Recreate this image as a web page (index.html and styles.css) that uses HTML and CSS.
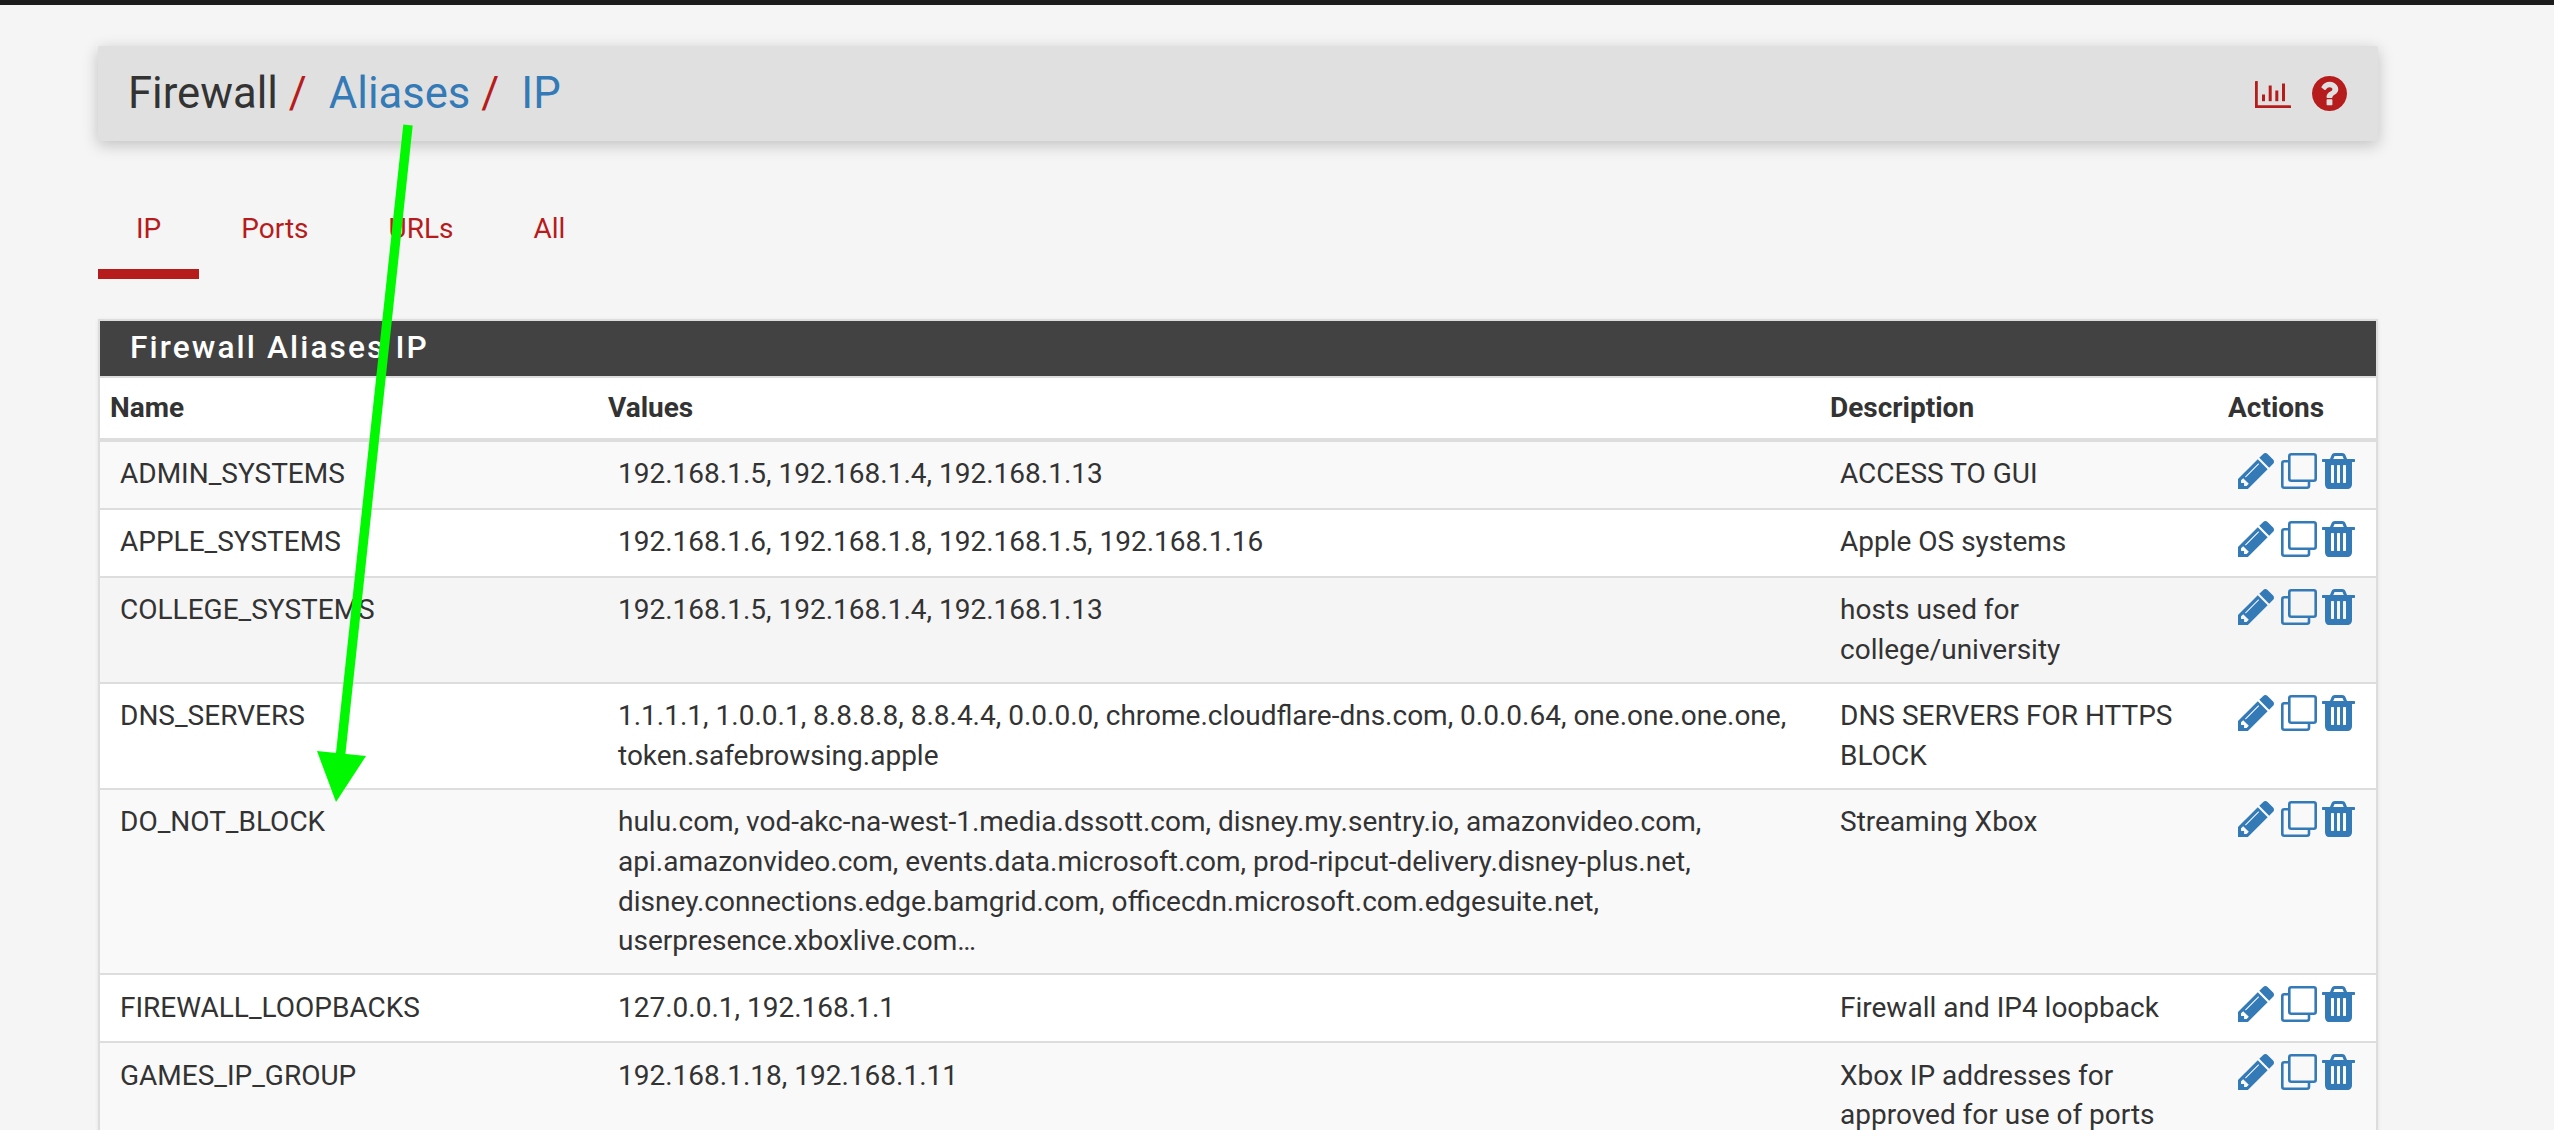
FILE: index.html
```html
<!DOCTYPE html>
<html lang="en">
<head>
<meta charset="utf-8">
<title>Firewall: Aliases: IP</title>
<link rel="stylesheet" href="styles.css">
</head>
<body>
<svg width="0" height="0" class="defs">
  <symbol id="i-pencil" viewBox="128 149 1515 1515"><path d="M491 1536l91-91-235-235-91 91v107h128v128h107zm523-928q0-22-22-22-10 0-17 7l-542 542q-7 7-7 17 0 22 22 22 10 0 17-7l542-542q7-7 7-17zm-54-192l416 416-832 832h-416v-416zm683 96q0 53-37 90l-166 166-416-416 166-165q36-38 90-38 53 0 91 38l235 234q37 39 37 91z"/></symbol>
  <symbol id="i-clone" viewBox="0 0 36 36"><rect x="8.3" y="1.3" width="26.4" height="26.4" rx="2" fill="none" stroke="currentColor" stroke-width="2.6"/><path d="M7 8.3H3.3a2 2 0 0 0-2 2V32.700a2 2 0 0 0 2 2H26a2 2 0 0 0 2-2V29" fill="none" stroke="currentColor" stroke-width="2.6"/></symbol>
  <symbol id="i-trash" viewBox="192 128 1408 1536"><path d="M704 1376v-704q0-14-9-23t-23-9h-64q-14 0-23 9t-9 23v704q0 14 9 23t23 9h64q14 0 23-9t9-23zm256 0v-704q0-14-9-23t-23-9h-64q-14 0-23 9t-9 23v704q0 14 9 23t23 9h64q14 0 23-9t9-23zm256 0v-704q0-14-9-23t-23-9h-64q-14 0-23 9t-9 23v704q0 14 9 23t23 9h64q14 0 23-9t9-23zm-544-992h448l-48-117q-7-9-17-11h-317q-10 2-17 11zm928 32v64q0 14-9 23t-23 9h-96v948q0 83-47 143.500t-113 60.500h-832q-66 0-113-58.500t-47-141.500v-952h-96q-14 0-23-9t-9-23v-64q0-14 9-23t23-9h309l70-167q15-37 54-63t79-26h320q40 0 79 26t54 63l70 167h309q14 0 23 9t9 23z"/></symbol>
</svg>
<div class="topbar"></div>
<main class="page">
  <header class="crumbs">
    <h1 class="crumb-list">
      <span class="crumb">Firewall</span><span class="sep">/</span>
      <a class="crumb link" href="#">Aliases</a><span class="sep">/</span>
      <a class="crumb link" href="#">IP</a>
    </h1>
    <div class="crumb-icons">
      <svg class="i-chart" viewBox="0 0 36 27" fill="#b71c1c"><rect x="0" y="0" width="2.800" height="27" rx=".6"/><rect x="0" y="24.200" width="36" height="2.800" rx=".6"/><rect x="7" y="13.500" width="3" height="6.700"/><rect x="13.700" y="4.500" width="3" height="15.700"/><rect x="20.300" y="9.500" width="3" height="10.700"/><rect x="27" y="2.500" width="3" height="17.700"/></svg>
      <svg class="i-help" viewBox="128 128 1536 1536" fill="#b71c1c"><path d="M1024 1376v-192q0-14-9-23t-23-9h-192q-14 0-23 9t-9 23v192q0 14 9 23t23 9h192q14 0 23-9t9-23zm256-672q0-88-55.500-163t-138.500-116-170-41q-243 0-371 213-15 24 8 42l132 100q7 6 19 6 16 0 25-12 53-68 86-92 34-24 86-24 48 0 85.500 26t37.500 59q0 38-20 61t-68 45q-63 28-115.500 86.500t-52.500 125.500v36q0 14 9 23t23 9h192q14 0 23-9t9-23q0-19 21.500-49.500t54.500-49.500q32-18 49-28.500t46-35 44.500-48 28-60.500 12.500-81zm384 192q0 209-103 385.500t-279.500 279.500-385.500 103-385.500-103-279.500-279.500-103-385.500 103-385.500 279.500-279.500 385.500-103 385.500 103 279.500 279.500 103 385.500z"/></svg>
    </div>
  </header>

  <nav class="tabs">
    <a class="tab active" href="#">IP</a>
    <a class="tab" href="#">Ports</a>
    <a class="tab" href="#">URLs</a>
    <a class="tab" href="#">All</a>
  </nav>

  <section class="panel">
    <h2 class="panel-title">Firewall Aliases IP</h2>
    <table class="aliases">
      <colgroup><col class="c-name"><col class="c-values"><col class="c-desc"><col class="c-actions"></colgroup>
      <thead>
        <tr><th>Name</th><th>Values</th><th>Description</th><th>Actions</th></tr>
      </thead>
      <tbody>
        <tr class="odd">
          <td>ADMIN_SYSTEMS</td><td>192.168.1.5, 192.168.1.4, 192.168.1.13</td><td>ACCESS TO GUI</td>
          <td class="acts"><div class="act-row"><svg class="ic"><use href="#i-pencil"/></svg><svg class="ic"><use href="#i-clone"/></svg><svg class="ic tr"><use href="#i-trash"/></svg></div></td>
        </tr>
        <tr>
          <td>APPLE_SYSTEMS</td><td>192.168.1.6, 192.168.1.8, 192.168.1.5, 192.168.1.16</td><td>Apple OS systems</td>
          <td class="acts"><div class="act-row"><svg class="ic"><use href="#i-pencil"/></svg><svg class="ic"><use href="#i-clone"/></svg><svg class="ic tr"><use href="#i-trash"/></svg></div></td>
        </tr>
        <tr class="hover">
          <td>COLLEGE_SYSTEMS</td><td>192.168.1.5, 192.168.1.4, 192.168.1.13</td><td>hosts used for college/university</td>
          <td class="acts"><div class="act-row"><svg class="ic"><use href="#i-pencil"/></svg><svg class="ic"><use href="#i-clone"/></svg><svg class="ic tr"><use href="#i-trash"/></svg></div></td>
        </tr>
        <tr>
          <td>DNS_SERVERS</td><td>1.1.1.1, 1.0.0.1, 8.8.8.8, 8.8.4.4, 0.0.0.0, chrome.cloudflare-dns.com, 0.0.0.64, one.one.one.one, token.safebrowsing.apple</td><td>DNS SERVERS FOR HTTPS BLOCK</td>
          <td class="acts"><div class="act-row"><svg class="ic"><use href="#i-pencil"/></svg><svg class="ic"><use href="#i-clone"/></svg><svg class="ic tr"><use href="#i-trash"/></svg></div></td>
        </tr>
        <tr class="odd">
          <td>DO_NOT_BLOCK</td><td>hulu.com, vod-akc-na-west-1.media.dssott.com, disney.my.sentry.io, amazonvideo.com, api.amazonvideo.com, events.data.microsoft.com, prod-ripcut-delivery.disney-plus.net, disney.connections.edge.bamgrid.com, officecdn.microsoft.com.edgesuite.net, userpresence.xboxlive.com…</td><td>Streaming Xbox</td>
          <td class="acts"><div class="act-row"><svg class="ic"><use href="#i-pencil"/></svg><svg class="ic"><use href="#i-clone"/></svg><svg class="ic tr"><use href="#i-trash"/></svg></div></td>
        </tr>
        <tr>
          <td>FIREWALL_LOOPBACKS</td><td>127.0.0.1, 192.168.1.1</td><td>Firewall and IP4 loopback</td>
          <td class="acts"><div class="act-row"><svg class="ic"><use href="#i-pencil"/></svg><svg class="ic"><use href="#i-clone"/></svg><svg class="ic tr"><use href="#i-trash"/></svg></div></td>
        </tr>
        <tr class="odd">
          <td>GAMES_IP_GROUP</td><td>192.168.1.18, 192.168.1.11</td><td>Xbox IP addresses for approved for use of ports</td>
          <td class="acts"><div class="act-row"><svg class="ic"><use href="#i-pencil"/></svg><svg class="ic"><use href="#i-clone"/></svg><svg class="ic tr"><use href="#i-trash"/></svg></div></td>
        </tr>
      </tbody>
    </table>
  </section>
</main>
<svg class="arrow" viewBox="0 0 2554 1130"><line x1="408" y1="125" x2="340" y2="760"/><polygon points="317,751 366,756 336,802"/></svg>
</body>
</html>
```
FILE: styles.css
```css
html, body {
  margin: 0;
  height: 1130px;
  overflow: hidden;
}
body {
  position: relative;
  background: #f5f5f5;
  color: #333;
  font-family: Roboto, "Liberation Sans", sans-serif;
  font-size: 28px;
  line-height: 39.6px;
}
.defs { position: absolute; }
.topbar { height: 5px; background: #1c1c1c; }
.page { margin: 41px 176px 0 98px; }

.crumbs {
  display: flex;
  align-items: center;
  justify-content: space-between;
  height: 95px;
  padding: 0 31px 0 30px;
  background: #e0e0e0;
  border-radius: 2px;
  box-shadow: 0 4px 16px rgba(0, 0, 0, .22);
}
.crumb-list {
  margin: 0;
  font-size: 43.6px;
  line-height: 60px;
  font-weight: 400;
  display: flex;
  align-items: baseline;
}
.crumb.link { color: #337ab7; text-decoration: none; }
.sep { color: #b71c1c; margin: 0 22px 0 11px; }
.crumb-icons { display: flex; align-items: center; gap: 21px; }
.i-chart { width: 36px; height: 27px; margin-top: 2px; }
.i-help { width: 35px; height: 35px; }

.tabs { display: flex; gap: 4px; margin-top: 37px; height: 101px; }
.tab {
  padding: 31px 38px 0;
  height: 60px;
  color: #b71c1c;
  text-decoration: none;
}
.tab.active { border-bottom: 10px solid #b71c1c; }

.panel {
  margin-top: 40px;
  background: #fff;
  border: 2px solid #ddd;
  border-bottom: 0;
  box-shadow: 0 1px 4px rgba(0, 0, 0, .08);
}
.panel-title {
  margin: 0;
  height: 55px;
  padding-left: 30px;
  background: #424242;
  color: #fff;
  font-size: 31.7px;
  line-height: 54px;
  font-weight: 500;
  letter-spacing: 2.1px;
}
.aliases {
  width: 100%;
  table-layout: fixed;
  border-collapse: collapse;
}
.c-name { width: 498px; }
.c-values { width: 1222px; }
.c-desc { width: 398px; }
.c-actions { width: 158px; }
.aliases th {
  padding: 10px 10px 10px;
  text-align: left;
  font-weight: 700;
  border-top: 2px solid #ddd;
  border-bottom: 4px solid #ddd;
}
.aliases td {
  padding: 12.500px 20px;
  vertical-align: top;
  border-top: 2px solid #ddd;
}
.aliases tbody tr:first-child td { border-top: 0; }
.odd { background: #f9f9f9; }
.hover { background: #f5f5f5; }
.aliases td.acts { padding: 11px 0 19px 20px; }
.act-row { display: flex; gap: 7px; color: #337ab7; }
.ic { width: 36px; height: 36px; fill: currentColor; flex: none; }
.ic.tr { width: 33px; margin-left: -2px; }

.arrow {
  position: absolute;
  left: 0;
  top: 0;
  width: 2554px;
  height: 1130px;
  pointer-events: none;
}
.arrow line { stroke: #00f800; stroke-width: 9.5; }
.arrow polygon { fill: #00f800; }
```
